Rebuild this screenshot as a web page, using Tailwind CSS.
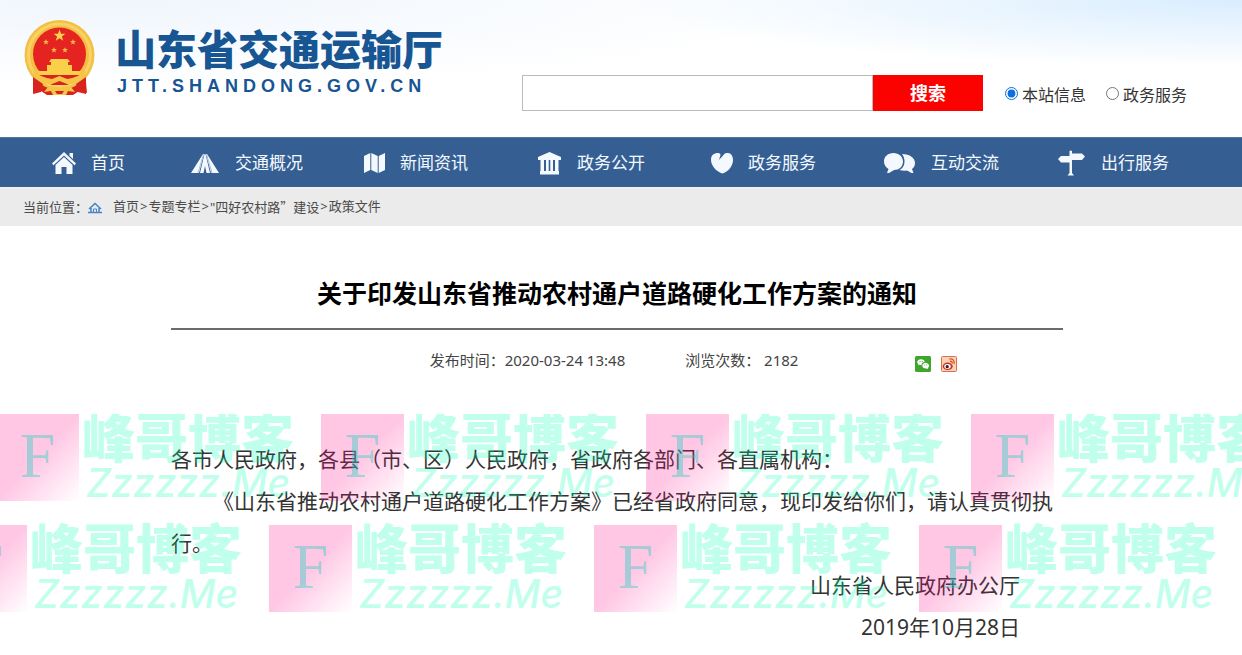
<!DOCTYPE html>
<html lang="zh-CN">
  <head>
    <meta charset="UTF-8" />
    <meta name="viewport" content="width=device-width, initial-scale=1.0" />
    <script src="https://cdn.jsdelivr.net/npm/@tailwindcss/browser@4"></script>
    <title>关于印发山东省推动农村通户道路硬化工作方案的通知</title>
  </head>

  <body class="min-h-screen overflow-x-hidden bg-white font-['Noto_Sans','Noto_Sans_CJK_SC',sans-serif] text-[#333]">
    <!-- header -->
    <header class="bg-radial-[at_10%_0%] from-[#f0f6fd] to-white to-45%">
      <div class="flex h-[137px] items-start justify-between bg-radial-[at_100%_0%] from-[#d9edfe] to-transparent to-35% pr-[55px] pl-6">
        <a href="#" class="flex items-start gap-5 pt-5">
          <svg class="h-[76px] w-[71px]" viewBox="0 0 71 76" aria-hidden="true">
            <path fill="#d8231f" d="M10 52 L9 73 L17 71 L23 75 L49 75 L55 71 L63 73 L61 52 Z" />
            <circle cx="35.500" cy="35" r="35" fill="#f3bf45" />
            <circle cx="35.500" cy="35" r="31" fill="none" stroke="#f9d264" stroke-width="3" />
            <circle cx="35.500" cy="34" r="26.500" fill="#e52320" />
            <path fill="#fbd34e" d="M35.500 9.500 l1.500 4.200 4.400.1 -3.500 2.700 1.300 4.300 -3.700-2.500 -3.700 2.500 1.300-4.300 -3.500-2.700 4.400-.1z" />
            <g fill="#f6b544">
              <path id="star" d="M22 19 l.8 2 2.100.1 -1.600 1.400 .5 2.100 -1.800-1.200 -1.800 1.200 .5-2.100 -1.600-1.400 2.100-.1z" />
              <use href="#star" x="27" />
              <use href="#star" x="8" y="8" />
              <use href="#star" x="19" y="8" />
            </g>
            <path fill="#fad04a" d="M27 39 h17 l2 3 h-2 v3 h4 v6 h10 l-3 4 H16 l-3-4 h10 v-6 h4 v-3 h-2z" />
            <path fill="#d8231f" d="M15 55 h41 l-4 5 -9 5 H28 l-9-5z" />
            <path fill="#f6c548" d="M9 50 Q17 58 28 59 L35.500 56 43 59 Q54 58 62 50 L60 59 Q52 65 43 64 L35.500 61 28 64 Q19 65 11 59z" />
            <path fill="#d8231f" d="M9 57 L19 64 17 72 9 74z M62 57 L52 64 54 72 62 74z" />
            <path fill="#f6c548" d="M24 67 Q30 65 35.500 68 41 65 47 67 L51 72 44 71 42 75 H29 L27 71 20 72z" />
            <path fill="#d8231f" d="M31 71 h9 l-2 3 h-5z" />
          </svg>
          <span class="flex flex-col text-[#175593]">
            <span class="font-['Noto_Sans_CJK_SC',sans-serif] text-[41px] leading-[54px] font-black">山东省交通运输厅</span>
            <span class="pl-[2px] font-['Liberation_Sans',sans-serif] text-[18px] leading-6 font-bold tracking-[5px]">JTT.SHANDONG.GOV.CN</span>
          </span>
        </a>
        <form class="flex items-center pt-[75px]">
          <input type="text" aria-label="搜索内容" class="h-9 w-[351px] border border-[#bbb] bg-white px-2 outline-none" />
          <button type="button" class="h-9 w-[110px] bg-[#fb0200] text-lg font-bold text-white">搜索</button>
          <label class="ml-[22px] flex items-center gap-1 pt-1 text-base">
            <input type="radio" name="scope" checked class="mb-1 size-[13px] accent-[#0a6fe0]" />本站信息
          </label>
          <label class="ml-5 flex items-center gap-1 pt-1 text-base">
            <input type="radio" name="scope" class="mb-1 size-[13px]" />政务服务
          </label>
        </form>
      </div>
    </header>

    <!-- main menu -->
    <nav class="grid h-[50px] grid-cols-[139fr_173fr_174fr_173fr_173fr_174fr_184fr] items-center border-t border-b border-t-[#58779a] border-b-[#3f6089] bg-[#355f93] pt-[2px] pl-[52px] text-[17px] whitespace-nowrap text-[#f4f9ff]">
      <a href="#" class="flex items-center gap-[15px]">
        <svg class="h-[22px] w-6" viewBox="0 0 24 22" fill="currentColor"><path d="M12 0 L24 11.500 22.500 13.200 12 3.500 1.500 13.200 0 11.500z M17.500 1 h3.500 v6 l-3.500-3.300z M12 5 L20.500 13 V22 H14.500 V15 H9.500 V22 H3.500 V13z" /></svg>
        首页
      </a>
      <a href="#" class="flex items-center gap-4">
        <svg class="h-[22px] w-7" viewBox="0 0 28 22" fill="currentColor"><path d="M12 2 L13 2 8 21 H0z M15 2 L16 2 28 21 H20z M13.500 2 H14.500 L19 21 H15.500 L14 14 12.500 21 H9z" /><path d="M12.500 2 L7 21 M15.500 2 L21 21" stroke="#a9c0dc" stroke-width="1" fill="none" /></svg>
        交通概况
      </a>
      <a href="#" class="flex items-center gap-[15px]">
        <svg class="h-[22px] w-[21px]" viewBox="0 0 21 22" fill="currentColor"><path d="M0 4 L6.300 1 V18 L0 21z M7.300 1 L13.700 4 V21 L7.300 18z M14.700 4 L21 1 V18 L14.700 21z" /></svg>
        新闻资讯
      </a>
      <a href="#" class="flex items-center gap-4">
        <svg class="h-6 w-[23px]" viewBox="0 0 23 24" fill="currentColor"><path d="M11.500 1 L23 6 V9 H0 V6z M2.500 9 H6 V20 H2.500z M8 9 H10.700 V20 H8z M12.300 9 H15 V20 H12.300z M17 9 H20.500 V20 H17z M2 20 H21 V23.500 H2z" /></svg>
        政务公开
      </a>
      <a href="#" class="flex items-center gap-[15px]">
        <svg class="h-6 w-[22px]" viewBox="0 0 22 24" fill="currentColor"><path d="M7 2 C9 2 9.500 3 9.500 4 L8 9 12.500 4 C14 2 15 2 17 2 C20 2 22 5 22 9 C22 15 17 21 11.500 22.500 C6 21 0 15 0 9 C0 4 3 2 7 2z" /></svg>
        政务服务
      </a>
      <a href="#" class="flex items-center gap-4">
        <svg class="h-6 w-[31px]" viewBox="0 0 31 24" fill="currentColor"><path d="M9.500 2 C15 2 19 6 19 10.500 C19 15.500 15 19 10 19 L5 22 H3 L4.500 18 C1.500 16 0 13.500 0 10.500 C0 5.500 4 2 9.500 2z" /><path d="M18 3 C26 3 31 7 31 12 C31 14.500 30 16.500 28 18 L29.500 22 H27.500 L23 19.500 C20.500 20 18 19.800 15.500 19 C19 17.500 20.500 14 20.500 10 C20.500 7.500 19.500 5 18 3z" /></svg>
        互动交流
      </a>
      <a href="#" class="flex items-center gap-4">
        <svg class="h-[26px] w-[27px]" viewBox="0 0 27 26" fill="currentColor"><path d="M11.500 1 Q12.500 0 14 1 V3.500 H24 L27 6.500 24 10 H14 V23 L16 25.500 H9.500 L11.500 23 V12.500 H3 L0 9 3 6 H11.500z" /></svg>
        出行服务
      </a>
    </nav>

    <!-- breadcrumb -->
    <div class="flex h-[39px] items-center border-t-2 border-[#e9f2f8] bg-[#ebebeb] pl-[23px] text-[13px] text-[#4a4a4a]">
      <span>当前位置：</span>
      <svg class="h-3 w-[14px]" viewBox="0 0 14 12" fill="none" stroke="#4285c8"><path d="M1 7 L7 1.500 13 7 M3 6 V10 M11 6 V10" stroke-width="1.500" /><path d="M0 10.500 H14" stroke-width="1.500" /><path d="M5.500 10 V7 H8.500 V10" /></svg>
      <div class="ml-[11px] flex gap-px">
        <a href="#">首页</a><span>&gt;</span><a href="#">专题专栏</a><span>&gt;</span><a href="#">"四好农村路<span class="font-['Noto_Sans_CJK_SC',sans-serif]">”</span>建设</a><span>&gt;</span><a href="#">政策文件</a>
      </div>
    </div>

    <!-- article -->
    <main class="relative pr-2">
      <article class="mx-auto w-full max-w-[892px] pt-[47px]">
        <h1 class="border-b-2 border-[#6b6b6b] pb-[15px] text-center text-[25px] leading-10 font-bold text-black">关于印发山东省推动农村通户道路硬化工作方案的通知</h1>
        <div class="flex h-15 items-center pl-[29%] text-[15px] text-[#444]">
          <span>发布时间：2020-03-24 13:48</span>
          <span class="ml-15">浏览次数： 2182</span>
          <span class="ml-[117px] flex gap-[10px] pt-2">
            <a href="#" aria-label="微信">
              <svg class="size-4" viewBox="0 0 16 16"><rect width="16" height="16" rx="1.500" fill="#3fa62c" /><path fill="#fff" d="M6 3.200 C8.200 3.200 9.700 4.500 9.700 6 C7.500 6.200 6.300 7.500 6.500 9.200 C5.500 9.200 5 9 4.500 8.800 L3.200 9.600 3.500 8.300 C1 6.500 2.500 3.200 6 3.200z M10.300 6.800 C12.500 6.800 14 8.200 14 9.800 C14 10.800 13.500 11.500 12.800 12 L13 13.200 11.800 12.500 C9.500 13 7.300 11.800 7.300 9.800 C7.300 8.200 8.500 6.800 10.300 6.800z" /><g fill="#3fa62c"><circle cx="5" cy="5.500" r=".6" /><circle cx="7.300" cy="5.500" r=".6" /><circle cx="9.400" cy="9" r=".5" /><circle cx="11.700" cy="9" r=".5" /></g></svg>
            </a>
            <a href="#" aria-label="微博">
              <svg class="size-4" viewBox="0 0 16 16"><rect x=".5" y=".5" width="15" height="15" rx="1" fill="#fbd3b4" stroke="#d9704f" /><ellipse cx="6.700" cy="10.300" rx="5" ry="3.700" fill="#c8322b" /><ellipse cx="6.500" cy="10.500" rx="3.200" ry="2.400" fill="#fff" /><circle cx="6.200" cy="10.700" r="1.600" fill="#3b1a1a" /><path d="M8.500 3 C11.500 2.300 13.800 4.500 13 7.800 M9 5.300 C10.500 5 11.500 6 11.200 7.500" fill="none" stroke="#d9542f" stroke-width="1.300" /></svg>
            </a>
          </span>
        </div>
        <div class="pt-12 text-[21px] leading-[42px]">
          <p>各市人民政府，各县（市、区）人民政府，省政府各部门、各直属机构：</p>
          <p class="indent-[42px]">《山东省推动农村通户道路硬化工作方案》已经省政府同意，现印发给你们，请认真贯彻执行。</p>
          <div class="pr-[43px] text-right">
            <p>山东省人民政府办公厅</p>
            <p>2019年10月28日</p>
          </div>
        </div>
      </article>

      <!-- watermark rows, over the article -->
      <div class="pointer-events-none absolute inset-x-0 top-[188px] flex flex-col gap-6 overflow-hidden select-none" aria-hidden="true">
        <div class="watermark-row -ml-1 flex"></div>
        <div class="watermark-row -ml-14 flex"></div>
      </div>
    </main>

    <template id="watermark">
      <div class="flex w-[325px] shrink-0 gap-[3px]">
        <div class="flex h-[87px] w-[83px] items-center justify-center bg-linear-to-br from-[#ff0085]/22 via-[#ff0085]/22 via-50% to-[#ff0085]/0 pb-1 font-['Liberation_Serif',serif] text-[64px] text-[#20d0c0]/40">F</div>
        <div class="whitespace-nowrap text-[#00ffb0]/25">
          <div class="font-['Noto_Sans_CJK_SC',sans-serif] text-[53px] leading-[43px] font-black">峰哥博客</div>
          <div class="pt-2 pl-1 font-['Inter',sans-serif] text-[39px] leading-9 font-medium italic">Zzzzzz.Me</div>
        </div>
      </div>
    </template>

    <script>
      const TILES_PER_ROW = 4;
      const watermark = document.querySelector("#watermark");

      document.querySelectorAll(".watermark-row").forEach((row) => {
        for (let i = 0; i < TILES_PER_ROW; i++) {
          row.appendChild(watermark.content.cloneNode(true));
        }
      });
    </script>
  </body>
</html>
